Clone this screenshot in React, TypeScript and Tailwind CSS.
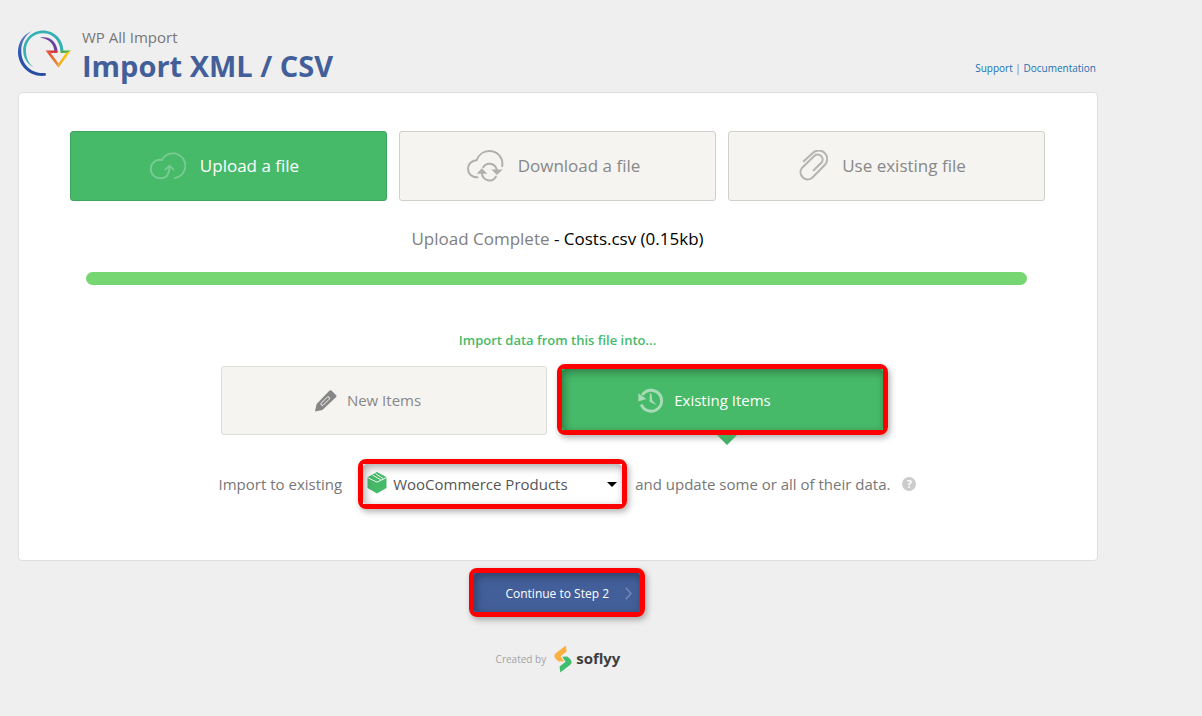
import { useState } from 'react';
import type { ReactNode } from 'react';

const ImportLogo = () => (
  <svg width="54" height="48" viewBox="0 0 54 48" fill="none" aria-hidden="true">
    <defs>
      <linearGradient id="blueArc" x1="14" y1="0" x2="14" y2="47" gradientUnits="userSpaceOnUse">
        <stop stopColor="#6d8cc8" />
        <stop offset="0.5" stopColor="#2a55ad" />
        <stop offset="1" stopColor="#2a4b9f" />
      </linearGradient>
      <linearGradient id="yellowSide" x1="40" y1="38" x2="52" y2="21" gradientUnits="userSpaceOnUse">
        <stop stopColor="#f0a020" />
        <stop offset="1" stopColor="#ffd200" />
      </linearGradient>
      <linearGradient id="redSide" x1="28" y1="21" x2="40" y2="38" gradientUnits="userSpaceOnUse">
        <stop stopColor="#dd4b39" />
        <stop offset="1" stopColor="#f0962d" />
      </linearGradient>
    </defs>
    <path d="M13.5 1.2C5 4.5 0 12.5 0 22C0 36 12.5 48 28 45.6L27.5 43C14 44.2 4 35 3.3 22.5C2.8 13.5 6.5 6 13.5 1.2Z" fill="url(#blueArc)" />
    <path d="M15.5 37.5C9 33.5 5.2 28 5.2 20.5C5.2 9.5 14 0.4 25 0.4C36.5 0.4 45.4 9.5 45.4 21H42.4C42 10.8 34.8 3.2 25 3.2C15.5 3.2 7.9 10.5 7.9 20C7.9 27.5 10.5 33 15.5 37.5Z" fill="#35b0b5" />
    <path d="M22 7.8C31 5.5 39.5 12 39.5 22H36.3C36.5 14.2 31 8.5 22 7.8Z" fill="#6a429b" />
    <path d="M27.6 20.4H39.5V23H32.8Z" fill="#d93a3c" />
    <path d="M27.6 20.4L32.8 23L40.5 33.5V37.8Z" fill="url(#redSide)" />
    <path d="M53 20.4L48 23L40.5 33.5V37.8Z" fill="url(#yellowSide)" />
    <path d="M42.5 20.4H53L48 23H42.5Z" fill="#55b04a" />
  </svg>
);

const UploadIcon = () => (
  <svg width="36" height="28" viewBox="0 0 36 28" fill="none" stroke="#79cb92" strokeWidth="1.9" strokeLinecap="round" aria-hidden="true">
    <path d="M12 7.9A9.3 9.3 0 1 0 10.5 26.3C16.5 26.3 19.5 22 19.5 14.2" />
    <path d="M12 7.9A12.4 12.4 0 1 1 25 26" />
    <path d="M15.3 17.6L19.5 13.8L23.5 17.6" />
  </svg>
);

const DownloadIcon = () => (
  <svg width="37" height="32" viewBox="0 0 37 32" fill="none" stroke="#b0b0af" strokeWidth="2" strokeLinecap="round" aria-hidden="true">
    <path d="M10.5 27.3C5 27.6 1 23.5 1 18.7C1 14 4.8 10.5 9.6 10.2C11.5 5 16.3 1.1 22.2 1.1C30.2 1.1 36.6 7.5 35.2 16.2" />
    <path d="M16.2 17.3C19 12.6 26 12.6 28.6 17C29.4 18.3 29.8 19.6 29.9 21" />
    <path d="M14.9 22.5C15.3 31.5 25.6 32.6 28.8 26.7" />
    <path d="M14.8 19.6L17.9 22.7H11.9ZM29.9 23.6L26.8 20.6H33.2Z" fill="#b0b0af" />
  </svg>
);

const ClipIcon = () => (
  <svg width="29" height="32" viewBox="0 0 29 32" fill="none" stroke="#b5b5b4" strokeWidth="2.1" strokeLinecap="round" aria-hidden="true">
    <path d="M4.7 11.3L13.5 3.3A8.4 8.4 0 0 1 26 14.7L13 28A7.2 7.2 0 0 1 2.9 18L15.5 5.8A4.9 4.9 0 0 1 22.5 12.6L14.7 20.2" />
  </svg>
);

const PencilIcon = () => (
  <svg width="22" height="22" viewBox="0 0 22 22" aria-hidden="true">
    <path d="M0 21.5L1.6 14L14.6 0.5Q15.6 -0.2 16.4 0.5L21.2 5.2Q21.8 6 21.2 6.9L7.4 20Z" fill="#868686" />
    <path d="M6 13.4L12.6 6.8Q14.6 6.4 14.6 8.8L8 15.4Q5.6 15.6 6 13.4Z" stroke="#f5f4f0" strokeWidth="1" fill="none" />
  </svg>
);

const HistoryIcon = () => (
  <svg width="26" height="25" viewBox="0 0 26 25" fill="none" aria-hidden="true">
    <path d="M4.3 7A10.5 10.5 0 1 1 3.3 16.5" stroke="#a8dcb8" strokeWidth="2.9" />
    <path d="M0.5 5.3L8.4 10.9L0.3 13.5Z" fill="#a8dcb8" />
    <path d="M11.8 5.5H13.4L14.2 12.3L18.8 17.3L11.6 13.8Z" fill="#a8dcb8" />
  </svg>
);

const BoxIcon = () => (
  <svg width="20" height="22" viewBox="0 0 20 22" aria-hidden="true">
    <path d="M10 0L19.5 5.3V16L10 21.5L0.5 16V5.3Z" fill="#46ba69" />
    <path d="M0.5 5.6L10 10.2L19.5 5.6M5.5 3L13.8 7.8M8.6 1.6L16.2 6.6" stroke="#fff" strokeWidth="0.9" fill="none" />
  </svg>
);

const SoflyyMark = () => (
  <svg width="18" height="28" viewBox="0 0 18 28" aria-hidden="true">
    <path d="M11.8 0.5L12.6 6.5L6.6 11.2L10 16.2L4.8 16.6Q-2 11.5 1.7 8.2Z" fill="#fbb040" />
    <path d="M6.3 27.5L5.6 21.5L11.6 16.8L8.2 11.8L13.2 11.4Q20 16.5 16.3 19.8Z" fill="#41bd70" />
  </svg>
);

const sources = [
  { id: 'upload', label: 'Upload a file', icon: <UploadIcon /> },
  { id: 'download', label: 'Download a file', icon: <DownloadIcon /> },
  { id: 'existing', label: 'Use existing file', icon: <ClipIcon /> },
];

const Highlight = ({ className = '', children }: { className?: string; children: ReactNode }) => (
  <div className={`relative rounded-lg border-[5px] border-[#fe0000] shadow-[2px_3px_6px_rgba(0,0,0,0.3)] ${className}`}>
    {children}
    <div className="pointer-events-none absolute inset-0 rounded-sm shadow-[inset_2px_3px_8px_rgba(0,0,0,0.35)]"></div>
  </div>
);

const App = () => {
  const [source, setSource] = useState('upload');

  return (
    <div className="min-h-screen bg-[#efefef] pt-[27px] pr-[104px] pl-[18px] font-['Open_Sans','Noto_Sans',sans-serif] text-[#777]">
      <header className="flex h-[65px] items-start justify-between">
        <div className="flex gap-2.5">
          <div className="pt-[3px]">
            <ImportLogo />
          </div>
          <div>
            <p className="text-[15px] leading-5">WP All Import</p>
            <h1 className="text-[29px] leading-[38px] font-bold text-[#435f9a]">Import XML / CSV</h1>
          </div>
        </div>
        <nav className="pt-[33px] pr-0.5 text-[10px] leading-4 text-[#2271b1]">
          <a href="#support">Support</a> <span className="text-[#777]">|</span> <a href="#docs">Documentation</a>
        </nav>
      </header>

      <main className="rounded-sm border border-[#dedede] bg-white pt-[38px] pr-[52px] pb-[51px] pl-[51px]">
        <div className="grid grid-cols-3 gap-3">
          {sources.map((item) => (
            <button
              key={item.id}
              type="button"
              onClick={() => setSource(item.id)}
              className={`flex h-[70px] items-center justify-center gap-3.5 rounded-[3px] border pr-2 text-[17px] ${
                source === item.id ? 'border-[#3ea45c] bg-[#46ba69] text-white' : 'border-[#d0cfc9] bg-[#f5f4f0] text-[#888]'
              }`}
            >
              {item.icon}
              <span>{item.label}</span>
            </button>
          ))}
        </div>

        <p className="mt-6 text-center text-[17px] leading-7 text-black">
          <span className="text-[#808080]">Upload Complete</span> - Costs.csv (0.15kb)
        </p>
        <div className="mt-[19px] mr-[18px] ml-4 h-[13px] rounded-full bg-[#76d772]"></div>

        <h2 className="mt-[45px] text-center text-[13px] leading-5 font-semibold text-[#46ba69]">Import data from this file into...</h2>

        <div className="mt-3.5 flex justify-center gap-2.5 pr-1.5">
          <button
            type="button"
            className="mt-0.5 flex h-[69px] w-[326px] items-center justify-center gap-2.5 rounded-[3px] border border-[#dddcd9] bg-[#f5f4f0] pr-8 text-[15px] text-[#888]"
          >
            <PencilIcon />
            <span>New Items</span>
          </button>
          <div className="relative">
            <Highlight className="w-[331px]">
              <button type="button" className="flex h-[61px] w-full items-center justify-center gap-2.5 bg-[#46ba69] pt-0.5 pr-9 text-[15px] text-white">
                <HistoryIcon />
                <span>Existing Items</span>
              </button>
            </Highlight>
            <svg className="absolute top-full left-40" width="20" height="10" viewBox="0 0 20 10" aria-hidden="true">
              <path d="M0 0H20L10 10Z" fill="#43b065" />
            </svg>
          </div>
        </div>

        <div className="mt-6 flex items-center justify-center pl-5 text-[15px]">
          <label htmlFor="item-type" className="mr-4">
            Import to existing
          </label>
          <Highlight className="w-[269px]">
            <div className="relative">
              <select id="item-type" className="h-10 w-full appearance-none bg-white pl-[30px] text-[15px] text-[#555]">
                <option>WooCommerce Products</option>
              </select>
              <span className="pointer-events-none absolute top-2 left-1">
                <BoxIcon />
              </span>
              <svg className="pointer-events-none absolute top-[18px] right-[5px]" width="10" height="5" viewBox="0 0 10 5" aria-hidden="true">
                <path d="M0 0H10L5 5Z" fill="#000" />
              </svg>
            </div>
          </Highlight>
          <span className="ml-2">and update some or all of their data.</span>
          <button type="button" aria-label="Help" className="ml-3 h-3.5 w-3.5 rounded-full bg-[#ccc] text-[11px] leading-3.5 font-bold text-white">
            ?
          </button>
        </div>
      </main>

      <div className="mt-[7px] flex justify-center pr-0.5">
        <Highlight className="w-44">
          <button type="button" className="flex h-[39px] w-full items-center justify-end gap-4 bg-[#435f9a] pt-0.5 pr-2 text-[12px] text-white">
            <span>Continue to Step 2</span>
            <svg width="7" height="13" viewBox="0 0 7 13" fill="none" stroke="#7389b7" strokeWidth="1.5" aria-hidden="true">
              <path d="M0.8 0.8L6 6.5L0.8 12.2" />
            </svg>
          </button>
        </Highlight>
      </div>

      <footer className="mt-7 flex items-center justify-center text-[10px] text-[#a3a3a3]">
        <span className="mr-2">Created by</span>
        <a href="#soflyy" className="flex items-center gap-1 text-[15px] leading-4 font-bold text-[#3e3e3e]">
          <SoflyyMark />
          <span className="pb-0.5">soflyy</span>
        </a>
      </footer>
    </div>
  );
};

export default App;
